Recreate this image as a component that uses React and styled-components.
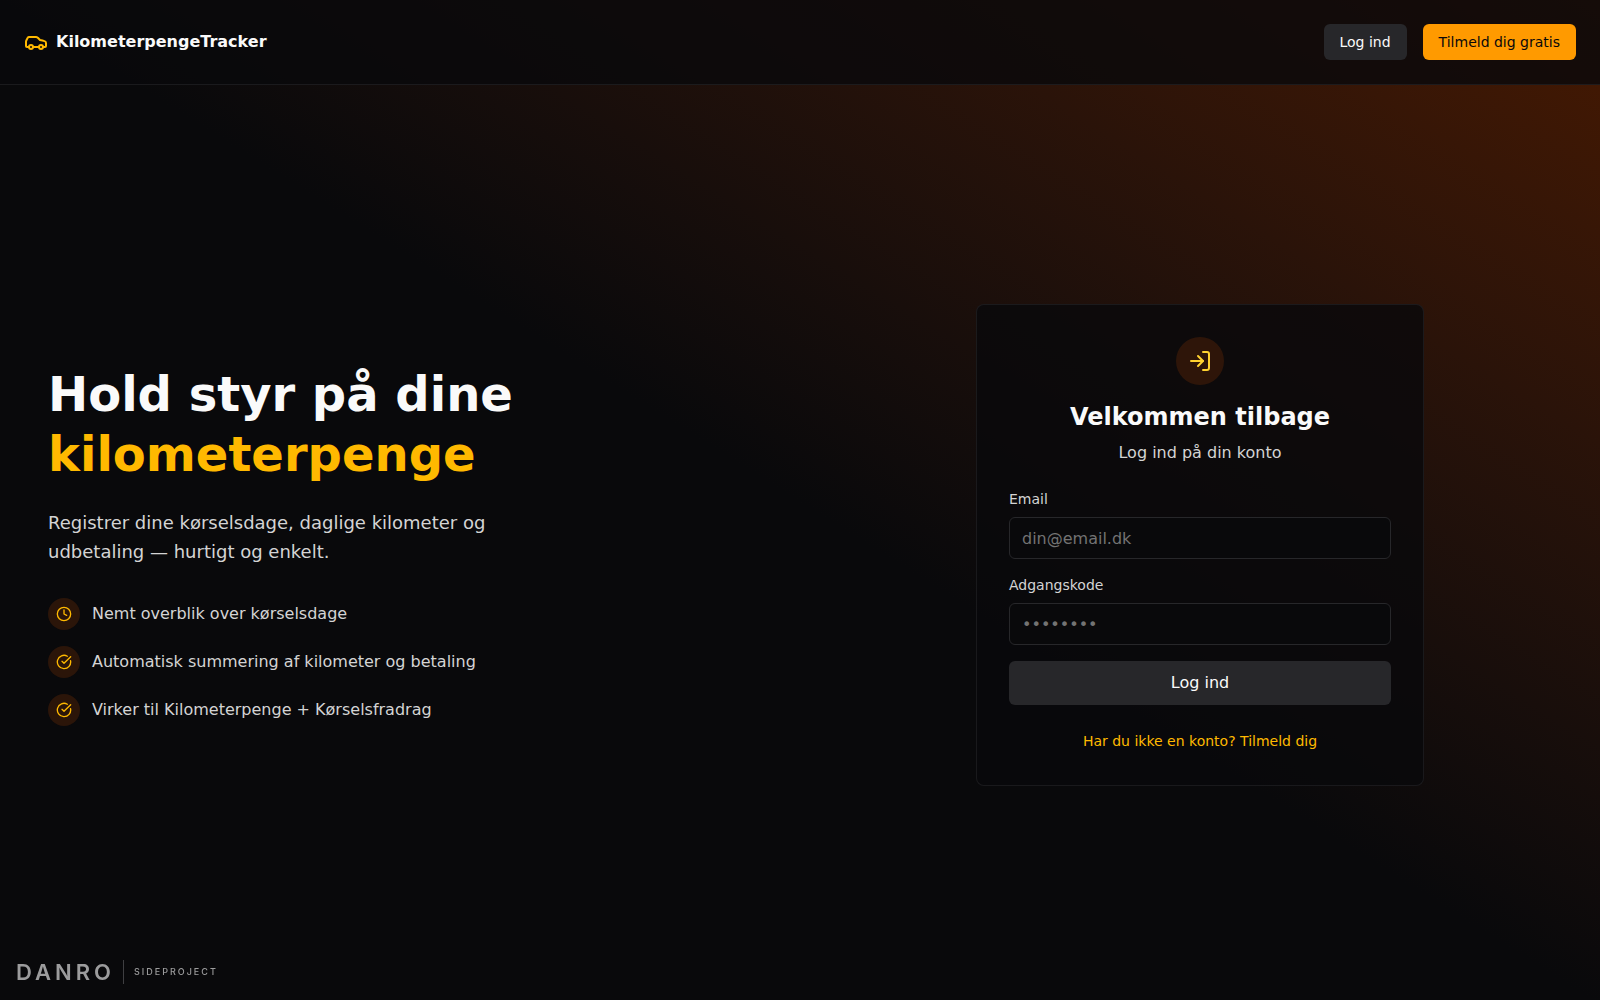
import React, { useState } from 'react';
import styled, { createGlobalStyle, ThemeProvider } from 'styled-components';
import { Car, CircleCheckBig, Clock, LogIn } from 'lucide-react';

const theme = {
  canvas: '#09090b',
  surface: 'rgba(9, 9, 11, 0.8)',
  stroke: '#27272a',
  strokeSoft: 'rgba(39, 39, 42, 0.6)',
  text: '#fafafa',
  textSoft: '#d4d4d4',
  textMuted: '#737373',
  amber: '#ffb900',
  amberLight: '#ffd230',
  amberBtn: '#ff9a00',
  amberDim: 'rgba(123, 51, 6, 0.3)',
};

const FEATURES = [
  { icon: Clock, text: 'Nemt overblik over kørselsdage' },
  { icon: CircleCheckBig, text: 'Automatisk summering af kilometer og betaling' },
  { icon: CircleCheckBig, text: 'Virker til Kilometerpenge + Kørselsfradrag' },
];

const GlobalStyle = createGlobalStyle`
  *,
  *::before,
  *::after {
    box-sizing: border-box;
  }

  body {
    margin: 0;
    background: ${(props) => props.theme.canvas};
    color: ${(props) => props.theme.text};
    font-family: 'DejaVu Sans', sans-serif;
    font-size: 16px;
    line-height: 24px;
  }

  h1,
  h2,
  p,
  ul {
    margin: 0;
    padding: 0;
  }

  button,
  input {
    font: inherit;
  }
`;

const Page = styled.div`
  min-height: 100vh;
  background: linear-gradient(to bottom left in oklab, #461901, ${(props) => props.theme.canvas} 50%);
`;

const Header = styled.header`
  display: flex;
  align-items: center;
  justify-content: space-between;
  padding: 24px;
  border-bottom: 1px solid ${(props) => props.theme.strokeSoft};
  background: ${(props) => props.theme.surface};
`;

const Brand = styled.a`
  display: flex;
  align-items: center;
  gap: 8px;
  color: ${(props) => props.theme.text};
  font-weight: bold;
  text-decoration: none;

  svg {
    color: ${(props) => props.theme.amber};
  }
`;

const Nav = styled.nav`
  display: flex;
  gap: 16px;
`;

const Button = styled.button`
  padding: 8px 16px;
  border: 0;
  border-radius: 6px;
  background: ${(props) => (props.$primary ? props.theme.amberBtn : props.theme.stroke)};
  color: ${(props) => (props.$primary ? props.theme.canvas : props.theme.text)};
  font-size: 14px;
  line-height: 20px;
  cursor: pointer;
`;

const Main = styled.main`
  display: grid;
  grid-template-columns: 1fr 1fr;
  align-items: center;
  min-height: calc(100vh - 80px);
`;

const Intro = styled.section`
  padding: 48px;
`;

const Title = styled.h1`
  font-size: 48px;
  line-height: 60px;

  span {
    display: block;
    color: ${(props) => props.theme.amber};
  }
`;

const Lead = styled.p`
  max-width: 448px;
  margin-top: 24px;
  color: ${(props) => props.theme.textSoft};
  font-size: 18px;
  line-height: 29px;
`;

const Features = styled.ul`
  display: flex;
  flex-direction: column;
  gap: 16px;
  margin-top: 32px;
  list-style: none;
`;

const Feature = styled.li`
  display: flex;
  align-items: center;
  gap: 12px;
  color: ${(props) => props.theme.textSoft};
`;

const Badge = styled.span`
  display: flex;
  align-items: center;
  justify-content: center;
  width: ${(props) => props.$size}px;
  height: ${(props) => props.$size}px;
  border-radius: 100%;
  background: ${(props) => props.theme.amberDim};
  color: ${(props) => (props.$light ? props.theme.amberLight : props.theme.amber)};
`;

const Side = styled.section`
  display: flex;
  justify-content: center;
  padding: 48px;
`;

const Card = styled.div`
  width: 100%;
  max-width: 448px;
  padding: 32px;
  border: 1px solid ${(props) => props.theme.strokeSoft};
  border-radius: 8px;
  background: ${(props) => props.theme.surface};
`;

const CardHead = styled.div`
  display: flex;
  flex-direction: column;
  align-items: center;
  margin-bottom: 24px;
`;

const CardTitle = styled.h2`
  margin-top: 16px;
  font-size: 24px;
  line-height: 32px;
`;

const CardText = styled.p`
  margin-top: 8px;
  color: ${(props) => props.theme.textSoft};
`;

const Form = styled.form`
  display: flex;
  flex-direction: column;
  gap: 16px;
`;

const Field = styled.div`
  display: flex;
  flex-direction: column;
  gap: 8px;
`;

const Label = styled.label`
  color: ${(props) => props.theme.textSoft};
  font-size: 14px;
  line-height: 20px;
`;

const Input = styled.input`
  width: 100%;
  height: 42px;
  padding: 8px 12px;
  border: 1px solid ${(props) => props.theme.stroke};
  border-radius: 6px;
  background: ${(props) => props.theme.canvas};
  color: ${(props) => props.theme.text};

  &::placeholder {
    color: ${(props) => props.theme.textMuted};
    opacity: 1;
  }
`;

const Submit = styled(Button)`
  height: 44px;
  font-size: 16px;
  line-height: 24px;
`;

const SignUp = styled.p`
  margin-top: 24px;
  text-align: center;

  a {
    color: ${(props) => props.theme.amber};
    font-size: 14px;
    text-decoration: none;
  }
`;

// stays in the corner of the window, over the page
const Credit = styled.footer`
  position: fixed;
  bottom: 0;
  left: 0;
  display: flex;
  align-items: center;
  gap: 8px;
  padding: 16px;
  color: #9c9c9d;
  font-family: Inter, sans-serif;
`;

const Wordmark = styled.span`
  font-size: 22px;
  font-weight: 600;
  letter-spacing: 4px;
`;

const Tagline = styled.span`
  padding-left: 10px;
  border-left: 1px solid #3f3f42;
  font-size: 9px;
  font-weight: 500;
  letter-spacing: 2px;
`;

export default function App() {
  const [email, setEmail] = useState('');
  const [password, setPassword] = useState('');

  return (
    <ThemeProvider theme={theme}>
      <GlobalStyle />
      <Page>
        <Header>
          <Brand href="#">
            <Car size={24} />
            KilometerpengeTracker
          </Brand>
          <Nav>
            <Button type="button">Log ind</Button>
            <Button type="button" $primary>
              Tilmeld dig gratis
            </Button>
          </Nav>
        </Header>
        <Main>
          <Intro>
            <Title>
              Hold styr på dine <span>kilometerpenge</span>
            </Title>
            <Lead>Registrer dine kørselsdage, daglige kilometer og udbetaling — hurtigt og enkelt.</Lead>
            <Features>
              {FEATURES.map(({ icon: Icon, text }) => (
                <Feature key={text}>
                  <Badge $size={32}>
                    <Icon size={16} />
                  </Badge>
                  {text}
                </Feature>
              ))}
            </Features>
          </Intro>
          <Side>
            <Card>
              <CardHead>
                <Badge $size={48} $light>
                  <LogIn size={24} />
                </Badge>
                <CardTitle>Velkommen tilbage</CardTitle>
                <CardText>Log ind på din konto</CardText>
              </CardHead>
              <Form onSubmit={(e) => e.preventDefault()}>
                <Field>
                  <Label htmlFor="email">Email</Label>
                  <Input
                    id="email"
                    type="email"
                    placeholder="din@email.dk"
                    value={email}
                    onChange={(e) => setEmail(e.target.value)}
                  />
                </Field>
                <Field>
                  <Label htmlFor="password">Adgangskode</Label>
                  <Input
                    id="password"
                    type="password"
                    placeholder="••••••••"
                    value={password}
                    onChange={(e) => setPassword(e.target.value)}
                  />
                </Field>
                <Submit type="submit">Log ind</Submit>
              </Form>
              <SignUp>
                <a href="#signup">Har du ikke en konto? Tilmeld dig</a>
              </SignUp>
            </Card>
          </Side>
        </Main>
        <Credit>
          <Wordmark>DANRO</Wordmark>
          <Tagline>SIDEPROJECT</Tagline>
        </Credit>
      </Page>
    </ThemeProvider>
  );
}
